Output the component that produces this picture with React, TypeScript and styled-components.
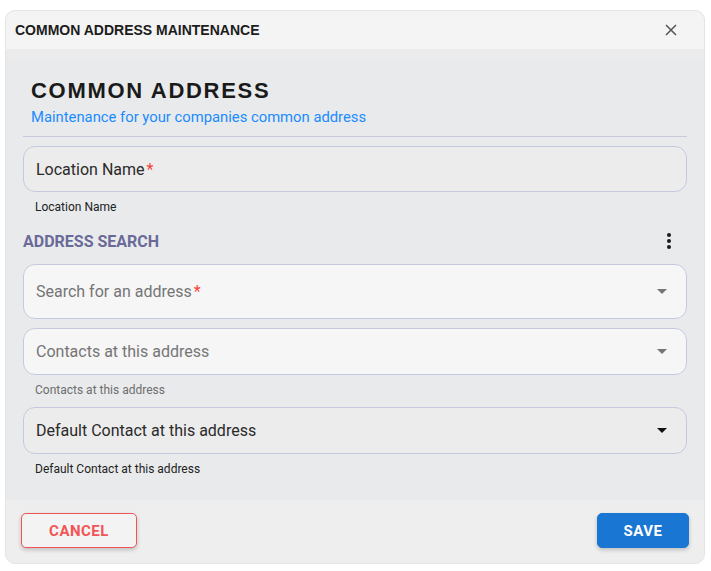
import React from 'react';
import styled, { createGlobalStyle } from 'styled-components';

const GlobalStyle = createGlobalStyle`
  html, body {
    margin: 0;
    padding: 0;
    background: #ffffff;
  }
  * {
    box-sizing: border-box;
  }
`;

const Page = styled.div`
  padding: 10px 6px 8px 5px;
  font-family: Roboto, 'Liberation Sans', sans-serif;
`;

const Dialog = styled.div`
  width: 700px;
  height: 554px;
  border: 1px solid #e4e4e4;
  border-radius: 10px;
  overflow: hidden;
  display: flex;
  flex-direction: column;
  background: #e9eaec;
`;

const TopBar = styled.div`
  height: 38px;
  flex: none;
  display: flex;
  align-items: center;
  justify-content: space-between;
  padding: 0 21px 0 9px;
  background: #f4f4f4;
`;

const TopTitle = styled.div`
  font-family: 'Liberation Sans', Arial, sans-serif;
  font-weight: 700;
  font-size: 14px;
  color: #1c1c1c;
`;

const CloseButton = styled.button`
  width: 24px;
  height: 24px;
  border: none;
  background: transparent;
  padding: 0;
  display: flex;
  align-items: center;
  justify-content: center;
  cursor: pointer;
`;

const Body = styled.div`
  flex: 1;
  padding: 29px 17px 0 17px;
  display: flex;
  flex-direction: column;
  background: linear-gradient(#ebebeb 0, #ebebeb 11px, #e9eaec 11px);
`;

const HeadingBlock = styled.div`
  padding: 0 8px 9px 8px;
  border-bottom: 1px solid #c8cade;
`;

const Heading = styled.h1`
  margin: 0;
  font-family: 'Liberation Sans', Arial, sans-serif;
  font-weight: 700;
  font-size: 22px;
  letter-spacing: 1.7px;
  line-height: 26px;
  color: #1a1a1a;
`;

const SubHeading = styled.div`
  margin-top: 3px;
  font-size: 14.8px;
  line-height: 20px;
  color: #1a8cff;
`;

const Field = styled.div<{ $height: number; $light?: boolean }>`
  height: ${(p) => p.$height}px;
  margin-top: 9px;
  border: 1px solid #c6c9dd;
  border-radius: 12px;
  background: ${(p) => (p.$light ? '#f6f6f6' : '#ececec')};
  display: flex;
  align-items: center;
  justify-content: space-between;
  padding: 0 19px 0 12px;
`;

const FieldLabel = styled.span<{ $muted?: boolean }>`
  font-size: 16px;
  color: ${(p) => (p.$muted ? '#757575' : '#2a2a2a')};
`;

const Required = styled.span`
  color: #f44336;
  margin-left: 2px;
`;

const Helper = styled.div<{ $muted?: boolean }>`
  margin-top: 7px;
  padding-left: 12px;
  font-size: 12px;
  line-height: 16px;
  color: ${(p) => (p.$muted ? '#6e6e6e' : '#222222')};
`;

const SectionRow = styled.div`
  margin-top: 14px;
  margin-bottom: 2px;
  height: 24px;
  display: flex;
  align-items: center;
  justify-content: space-between;
  padding-right: 15px;
`;

const SectionTitle = styled.div`
  font-size: 16px;
  font-weight: 700;
  color: #6a6a98;
`;

const Footer = styled.div`
  height: 63px;
  flex: none;
  background: #eeeeee;
  display: flex;
  align-items: flex-start;
  justify-content: space-between;
  padding: 13px 15px 0 15px;
`;

const Button = styled.button<{ $primary?: boolean }>`
  height: 35px;
  width: ${(p) => (p.$primary ? 92 : 116)}px;
  border-radius: 5px;
  font-family: Roboto, 'Liberation Sans', sans-serif;
  font-weight: 700;
  font-size: 15px;
  letter-spacing: 0.5px;
  cursor: pointer;
  border: 1px solid ${(p) => (p.$primary ? '#1976d2' : '#f05555')};
  background: ${(p) => (p.$primary ? '#1976d2' : '#f3f3f3')};
  color: ${(p) => (p.$primary ? '#ffffff' : '#f25555')};
  box-shadow: 0 2px 4px rgba(0, 0, 0, 0.2);
`;

const Arrow = ({ dark }: { dark?: boolean }) => (
  <svg width="10" height="5" viewBox="0 0 10 5">
    <path d="M0 0 L10 0 L5 5 Z" fill={dark ? '#111' : '#757575'} />
  </svg>
);

export default function App() {
  return (
    <Page>
      <GlobalStyle />
      <Dialog>
        <TopBar>
          <TopTitle>COMMON ADDRESS MAINTENANCE</TopTitle>
          <CloseButton aria-label="close">
            <svg width="12" height="12" viewBox="0 0 12 12">
              <path d="M1 1 L11 11 M11 1 L1 11" stroke="#555" strokeWidth="1.5" />
            </svg>
          </CloseButton>
        </TopBar>
        <Body>
          <HeadingBlock>
            <Heading>COMMON ADDRESS</Heading>
            <SubHeading>Maintenance for your companies common address</SubHeading>
          </HeadingBlock>

          <Field $height={46}>
            <FieldLabel>
              Location Name<Required>*</Required>
            </FieldLabel>
          </Field>
          <Helper>Location Name</Helper>

          <SectionRow>
            <SectionTitle>ADDRESS SEARCH</SectionTitle>
            <svg width="6" height="16" viewBox="0 0 6 16">
              <circle cx="3" cy="2" r="2" fill="#1a1a1a" />
              <circle cx="3" cy="8" r="2" fill="#1a1a1a" />
              <circle cx="3" cy="14" r="2" fill="#1a1a1a" />
            </svg>
          </SectionRow>

          <Field $height={55} $light>
            <FieldLabel $muted>
              Search for an address<Required>*</Required>
            </FieldLabel>
            <Arrow />
          </Field>
          <Field $height={47} $light>
            <FieldLabel $muted>Contacts at this address</FieldLabel>
            <Arrow />
          </Field>
          <Helper $muted>Contacts at this address</Helper>

          <Field $height={47}>
            <FieldLabel>Default Contact at this address</FieldLabel>
            <Arrow dark />
          </Field>
          <Helper>Default Contact at this address</Helper>
        </Body>
        <Footer>
          <Button>CANCEL</Button>
          <Button $primary>SAVE</Button>
        </Footer>
      </Dialog>
    </Page>
  );
}
